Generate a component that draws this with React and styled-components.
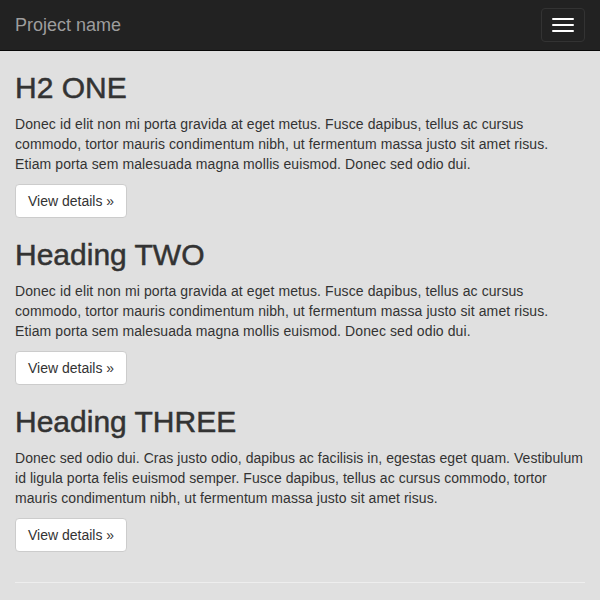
import React from 'react';
import styled, { createGlobalStyle } from 'styled-components';

const GlobalStyle = createGlobalStyle`
  * {
    box-sizing: border-box;
  }
  body {
    margin: 0;
    background: #e0e0e0;
    color: #333;
    font-family: "Liberation Sans", Arial, sans-serif;
    font-size: 14px;
    line-height: 20px;
  }
`;

const Navbar = styled.nav`
  display: flex;
  align-items: center;
  justify-content: space-between;
  height: 51px;
  padding: 0 15px;
  background: #222;
  border-bottom: 1px solid #080808;
`;

const Brand = styled.a`
  font-size: 18px;
  line-height: 20px;
  color: #9d9d9d;
  text-decoration: none;
`;

const Toggle = styled.button`
  display: flex;
  flex-direction: column;
  gap: 4px;
  padding: 9px 10px;
  background: transparent;
  border: 1px solid #333;
  border-radius: 4px;
  cursor: pointer;
`;

const IconBar = styled.span`
  display: block;
  width: 22px;
  height: 2px;
  border-radius: 1px;
  background: #fff;
`;

const Container = styled.main`
  padding: 0 15px;
`;

const Section = styled.section`
  padding-top: 20px;
`;

const Heading = styled.h2`
  margin: 0 0 10px;
  font-size: 30px;
  font-weight: 500;
  line-height: 33px;
  -webkit-text-stroke: 0.5px #333;
`;

const Para = styled.p`
  margin: 0 0 10px;
  letter-spacing: ${(p) => p.$tracking || '0.05px'};
`;

const Button = styled.a`
  display: inline-block;
  padding: 6px 12px;
  font-size: 14px;
  line-height: 20px;
  color: #333;
  background: #fff;
  border: 1px solid #ccc;
  border-radius: 4px;
  text-decoration: none;
`;

const Rule = styled.hr`
  margin: 30px 0 0;
  border: 0;
  border-top: 1px solid #eee;
`;

const sections = [
  {
    title: 'H2 ONE',
    tracking: '0.1px',
    text: 'Donec id elit non mi porta gravida at eget metus. Fusce dapibus, tellus ac cursus commodo, tortor mauris condimentum nibh, ut fermentum massa justo sit amet risus. Etiam porta sem malesuada magna mollis euismod. Donec sed odio dui.',
  },
  {
    title: 'Heading TWO',
    tracking: '0.1px',
    text: 'Donec id elit non mi porta gravida at eget metus. Fusce dapibus, tellus ac cursus commodo, tortor mauris condimentum nibh, ut fermentum massa justo sit amet risus. Etiam porta sem malesuada magna mollis euismod. Donec sed odio dui.',
  },
  {
    title: 'Heading THREE',
    tracking: '0.05px',
    text: 'Donec sed odio dui. Cras justo odio, dapibus ac facilisis in, egestas eget quam. Vestibulum id ligula porta felis euismod semper. Fusce dapibus, tellus ac cursus commodo, tortor mauris condimentum nibh, ut fermentum massa justo sit amet risus.',
  },
];

export default function App() {
  return (
    <>
      <GlobalStyle />
      <Navbar>
        <Brand href="#">Project name</Brand>
        <Toggle aria-label="Toggle navigation">
          <IconBar />
          <IconBar />
          <IconBar />
        </Toggle>
      </Navbar>
      <Container>
        {sections.map((s) => (
          <Section key={s.title}>
            <Heading>{s.title}</Heading>
            <Para $tracking={s.tracking}>{s.text}</Para>
            <Button href="#">View details &raquo;</Button>
          </Section>
        ))}
        <Rule />
      </Container>
    </>
  );
}
